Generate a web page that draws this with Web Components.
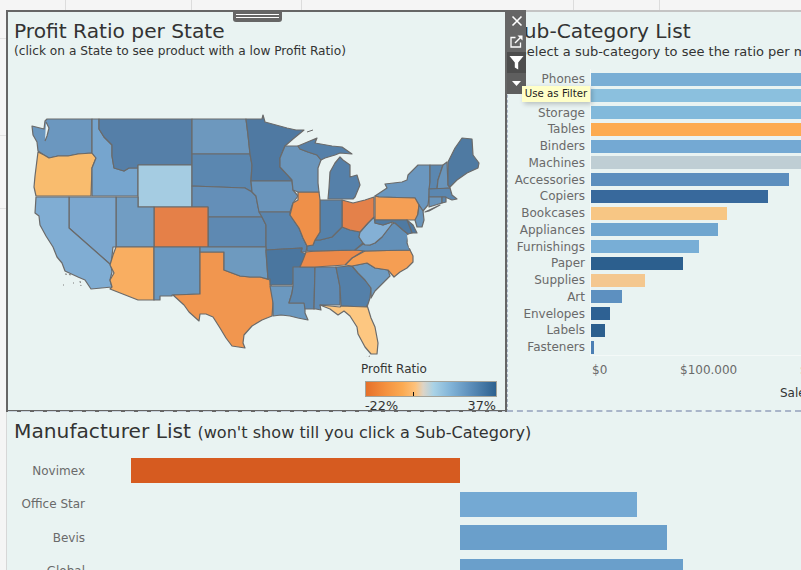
<!DOCTYPE html>
<html>
<head>
<meta charset="utf-8">
<style>
  html, body { margin: 0; height: 100%; overflow: hidden; }
  body { font-family: "DejaVu Sans", sans-serif; }
</style>
</head>
<body>
<dash-board>
  <viz-panel slot="map" active>
    <span slot="title">Profit Ratio per State</span>
    <span slot="sub">(click on a State to see product with a low Profit Ratio)</span>
    <us-map></us-map>
    <ratio-legend></ratio-legend>
  </viz-panel>
  <viz-panel slot="list">
    <span slot="title">Sub-Category List</span>
    <span slot="sub" style="padding-left:2.5px;font-size:13px">(Select a sub-category to see the ratio per manufacturer)</span>
    <sub-chart></sub-chart>
  </viz-panel>
  <viz-toolbar slot="tools"></viz-toolbar>
  <maker-panel slot="makers"></maker-panel>
</dash-board>

<script>
// page frame: the faint worksheet grid behind the dashboard
class DashBoard extends HTMLElement {
  constructor() {
    super();
    this.attachShadow({ mode: "open" });
    this.shadowRoot.innerHTML = `
      <style>
        :host {
          display: grid;
          grid-template-columns: 501px 294px;
          grid-template-rows: 402px 158px;
          padding: 10px 0 0 6px;
          width: 795px;
          height: 560px;
          overflow: hidden;
          position: relative;
          background-color: #f5f5f5;
          background-image:
            linear-gradient(#dcdcdc, #dcdcdc), linear-gradient(#dcdcdc, #dcdcdc),
            linear-gradient(#dcdcdc, #dcdcdc), linear-gradient(#dcdcdc, #dcdcdc),
            linear-gradient(#dcdcdc, #dcdcdc), linear-gradient(#e2e2e2, #e2e2e2),
            linear-gradient(#e2e2e2, #e2e2e2), linear-gradient(#e2e2e2, #e2e2e2);
          background-size: 1px 10px, 1px 10px, 1px 10px, 1px 10px, 1px 10px, 6px 1px, 6px 1px, 6px 1px;
          background-position: 65px 0, 191px 0, 301px 0, 573px 0, 659px 0, 0 38px, 0 135px, 0 208px;
          background-repeat: no-repeat;
        }
        .makers { grid-column: 1 / 3; }
      </style>
      <slot name="map"></slot>
      <slot name="list"></slot>
      <div class="makers"><slot name="makers"></slot></div>
      <slot name="tools"></slot>
    `;
  }
}

class VizPanel extends HTMLElement {
  constructor() {
    super();
    this.attachShadow({ mode: "open" });
    this.shadowRoot.innerHTML = `
      <style>
        :host {
          display: flex;
          flex-direction: column;
          box-sizing: border-box;
          height: 402px;
          position: relative;
          overflow: hidden;
          background: #e9f3f2;
          color: #333;
          border-top: 2px solid #c4c4c4;
          border-bottom: 2px dashed #a9b5c9;
          border-left: 1px dashed #a9b5c9;
          padding-left: 3px;
        }
        :host([active]) {
          border: 2px solid #666;
          padding-left: 6px;
          overflow: visible;
        }
        h2 { margin: 7px 0 0; font: 400 20.2px/24px "DejaVu Sans", sans-serif; white-space: nowrap; }
        p { margin: 1px 0 0; font: 400 12.2px/15px "DejaVu Sans", sans-serif; white-space: nowrap; }
        .handle {
          display: none;
          position: absolute;
          left: 225px; top: -2px;
          width: 49px; height: 12px;
          box-sizing: border-box;
          background: #666;
          border-radius: 0 0 3px 3px;
          padding: 4px 3px 0;
        }
        :host([active]) .handle { display: block; }
        .handle i { display: block; height: 1px; background: #fff; margin-bottom: 2px; }
        .seam {
          display: none;
          position: absolute;
          left: 0; right: 0; bottom: -2px;
          height: 1px;
          background: repeating-linear-gradient(90deg, #c9d3dc 0 9px, transparent 9px 13px);
        }
        :host([active]) .seam { display: block; }
      </style>
      <div class="handle"><i></i><i></i></div>
      <h2><slot name="title"></slot></h2>
      <p><slot name="sub"></slot></p>
      <slot></slot>
      <div class="seam"></div>
    `;
  }
}

// state outlines in page pixels, traced off the reference
const STATES = [
  ["#6b97bf", "M32 126 L44 129 L45 121 L47 119 L92 119 L92 153 L78 154 L68 156 L58 156 L49 158 L44 155 L38 151 L37 142 L33 135Z"],
  ["#f9bc6e", "M38 152 L44 155 L49 158 L58 156 L68 156 L78 154 L92 153 L96 158 L92 168 L91 196 L36 196 L34 187 L35 176Z"],
  ["#76a5ce", "M92 119 L99 119 L99 129 L104 137 L112 145 L112 156 L114 168 L124 171 L129 168 L138 168 L138 196 L92 196 L92 168 L96 158 L92 153Z"],
  ["#557fa8", "M99 119 L192 119 L192 165 L138 165 L138 168 L129 168 L124 171 L114 168 L112 156 L112 145 L104 137 L99 129Z"],
  ["#a5cce2", "M138 165 L192 165 L192 207 L138 207Z"],
  ["#6d98be", "M192 119 L246 119 L248 135 L250 154 L192 154Z"],
  ["#5b87b0", "M192 154 L250 154 L252 165 L251 181 L252 192 L245 188 L192 186Z"],
  ["#648fb8", "M192 186 L245 188 L252 192 L256 196 L258 207 L262 217 L208 217 L208 207 L192 207Z"],
  ["#4f79a2", "M246 119 L262 119 L263 115 L265 122 L276 125 L287 128 L296 130 L304 130 L293 139 L285 146 L280 158 L280 167 L288 175 L292 181 L251 181 L252 165 L250 154 L248 135Z"],
  ["#6994bb", "M251 181 L292 181 L293 190 L298 196 L293 203 L290 212 L259 212 L256 196 L252 192Z"],
  ["#5e89b2", "M208 217 L262 217 L266 225 L266 247 L208 247Z"],
  ["#5a85ae", "M259 212 L290 212 L290 215 L299 228 L303 238 L307 246 L306 252 L301 252 L302 248 L266 250 L266 225 L262 217Z"],
  ["#e58048", "M154 207 L208 207 L208 247 L154 247Z"],
  ["#719dc3", "M116 197 L138 197 L138 207 L154 207 L154 247 L116 247Z"],
  ["#7ba7cf", "M69 197 L116 197 L116 247 L113 247 L111 265 L69 228Z"],
  ["#80add3", "M36 197 L69 197 L69 228 L111 265 L112 272 L110 280 L112 287 L91 289 L85 280 L78 277 L65 271 L62 263 L57 257 L53 247 L46 236 L40 225 L39 216 L35 213Z"],
  ["#f9ae61", "M116 247 L154 247 L154 300 L138 300 L110 289 L112 287 L110 280 L114 273 L110 265 L113 255Z"],
  ["#6b98bf", "M154 247 L200 247 L200 294 L172 295 L172 296 L160 296 L160 300 L154 300Z"],
  ["#f1964f", "M200 252 L224 252 L224 270 L232 273 L240 276 L250 277 L260 277 L270 280 L272 290 L273 303 L272 316 L262 320 L252 326 L244 335 L243 343 L245 348 L232 346 L226 338 L220 328 L213 317 L206 314 L200 314 L199 321 L189 312 L184 305 L173 295 L200 294Z"],
  ["#6e9abf", "M200 247 L266 247 L266 252 L268 279 L260 277 L250 277 L240 276 L232 273 L224 270 L224 252 L200 252Z"],
  ["#4a769f", "M266 250 L302 248 L301 252 L306 254 L302 263 L296 273 L292 285 L270 285 L270 279 L268 279Z"],
  ["#6b98bf", "M270 286 L293 286 L292 293 L289 303 L305 303 L305 313 L308 320 L298 318 L290 316 L281 315 L273 316 L273 303Z"],
  ["#5b87b0", "M293 267 L315 267 L314 309 L305 309 L304 303 L289 303 L292 293 L293 286Z"],
  ["#5f8ab3", "M315 267 L336 267 L340 287 L340 305 L320 305 L321 310 L316 309 L314 309Z"],
  ["#5480a9", "M336 267 L352 266 L358 273 L365 280 L371 288 L370 298 L367 307 L341 306 L340 287Z"],
  ["#6e9bc1", "M352 266 L367 263 L375 268 L388 270 L390 276 L383 283 L375 291 L371 298 L371 288 L365 280 L358 273Z"],
  ["#f59e53", "M345 265 L352 258 L365 251 L410 250 L413 256 L413 262 L407 268 L400 272 L394 277 L388 270 L375 268 L367 263 L352 266Z"],
  ["#ec8a49", "M300 267 L303 260 L306 252 L316 251 L365 250 L352 258 L345 265 L315 267Z"],
  ["#5683ac", "M307 251 L307 246 L313 245 L315 240 L320 240 L332 237 L342 227 L350 230 L360 232 L359 237 L363 243 L355 250 L316 251Z"],
  ["#6390b8", "M355 250 L363 244 L370 245 L375 243 L382 237 L392 224 L395 223 L403 230 L408 234 L407 243 L410 250 L365 251Z"],
  ["#84b0d5", "M359 237 L360 232 L368 223 L374 217 L375 223 L383 225 L392 222 L392 224 L382 237 L375 243 L370 245 L365 245 L363 243Z"],
  ["#e4814a", "M342 200 L353 203 L365 200 L374 197 L374 217 L368 223 L360 232 L350 230 L342 227Z"],
  ["#5682ab", "M320 200 L328 200 L342 200 L342 227 L332 237 L320 240 L315 240 L320 232Z"],
  ["#ef9049", "M298 192 L319 192 L320 200 L320 232 L315 240 L313 245 L307 246 L303 238 L299 228 L290 215 L293 203 L298 200Z"],
  ["#6a95bb", "M280 158 L285 146 L298 146 L300 149 L308 152 L317 155 L321 160 L318 168 L318 183 L319 192 L298 192 L293 190 L292 180 L280 167Z"],
  ["#5580a9", "M298 146 L317 138 L315 143 L332 146 L342 147 L352 154 L340 153 L335 155 L325 158 L321 160 L317 155 L308 152 L300 149Z"],
  ["#5580a9", "M340 157 L343 160 L350 165 L350 177 L357 175 L360 185 L355 197 L353 199 L328 199 L329 188 L330 172 L335 163Z"],
  ["#6b97bf", "M385 184 L402 182 L407 180 L408 175 L418 165 L430 165 L430 182 L429 197 L428 205 L423 211 L419 205 L415 198 L379 197 L375 196 L387 188Z"],
  ["#f59f55", "M375 196 L379 197 L415 198 L419 205 L417 220 L375 220Z"],
  ["#6a95bb", "M419 205 L423 211 L424 220 L422 227 L417 227 L415 220 L418 214Z"],
  ["#4f79a2", "M407 220 L413 225 L417 233 L412 233Z"],
  ["#4f7aa2", "M375 220 L407 220 L412 233 L408 234 L403 230 L395 223 L392 222 L383 225 L375 223Z"],
  ["#5b87b0", "M430 165 L443 165 L438 180 L437 189 L429 189 L430 182Z"],
  ["#6a95bb", "M443 165 L447 162 L448 185 L450 188 L437 189 L438 180Z"],
  ["#4f7aa2", "M448 162 L455 148 L462 138 L472 139 L473 155 L479 163 L478 168 L467 173 L457 180 L450 187 L448 185Z"],
  ["#5b87b0", "M429 189 L450 188 L452 195 L457 199 L452 200 L445 197 L429 197Z"],
  ["#6a95bb", "M429 197 L442 197 L442 203 L429 207Z"],
  ["#5b87b0", "M442 197 L446 197 L446 202 L442 203Z"],
  ["#6b97bf", "M425 212 L440 205 L429 211Z"],
  ["#fdc781", "M320 305 L340 307 L341 306 L367 307 L367 305 L371 318 L375 327 L378 343 L377 354 L371 354 L365 347 L358 334 L357 327 L350 316 L344 311 L338 315 L330 309Z"],
];

class UsMap extends HTMLElement {
  constructor() {
    super();
    this.attachShadow({ mode: "open" });
    const shapes = STATES.map(([fill, d]) => `<path d="${d}" fill="${fill}"/>`).join("");
    this.shadowRoot.innerHTML = `
      <style>
        :host { display: block; margin: 46px 0 0 -6px; height: 252px; }
        svg { display: block; width: 497px; height: 252px; }
        path { stroke: #6a6a6a; stroke-width: 1.2; stroke-linejoin: round; }
        .speck { fill: none; stroke: #7a7a7a; stroke-width: 1; stroke-dasharray: 2 2; }
      </style>
      <svg viewBox="8 105 497 252">
        ${shapes}
        <path d="M46 122 L49 128 L47 136 L45 141" fill="#e9f3f2"/>
        <path class="speck" d="M65 274 L72 275 M73 283 L74 283 M80 281 L81 286 M63 285 L64 285"/>
        <path d="M307 132 L313 130" fill="none" style="stroke-width:1"/>
        <path class="speck" d="M365 358 L370 356"/>
        <path d="M408 235 L410 248" fill="none" style="stroke:#e9f3f2;stroke-width:2"/>
      </svg>
    `;
  }
}

class RatioLegend extends HTMLElement {
  constructor() {
    super();
    this.attachShadow({ mode: "open" });
    this.shadowRoot.innerHTML = `
      <style>
        :host { display: block; margin: 5px 0 0 347px; font: 12px/14px "DejaVu Sans", sans-serif; color: #333; }
        .bar {
          position: relative;
          box-sizing: border-box;
          width: 132px; height: 16px;
          margin: 5px 0 0 4px;
          border: 1px solid #a3a39a;
          background: linear-gradient(90deg, #e6702a 0%, #f4913f 15%, #fbaa52 28%, #fdc27c 38%, #ddd4c6 44%, #a9d2e6 52%, #82b4d8 65%, #5d8fbb 80%, #2d618f 100%);
        }
        .tick { position: absolute; left: 47px; bottom: 0; width: 1px; height: 4px; background: #111; }
        .ends { display: flex; justify-content: space-between; width: 131px; margin: 2px 0 0 4px; font-size: 12.8px; }
      </style>
      <div>Profit Ratio</div>
      <div class="bar"><div class="tick"></div></div>
      <div class="ends"><span>-22%</span><span>37%</span></div>
    `;
  }
}

class VizToolbar extends HTMLElement {
  constructor() {
    super();
    this.attachShadow({ mode: "open" });
    this.shadowRoot.innerHTML = `
      <style>
        :host {
          display: block;
          position: absolute;
          left: 507px; top: 10px;
          width: 19px;
          background: #666;
        }
        div { height: 21px; display: flex; align-items: center; justify-content: center; }
        .on { background: #4d4d4d; }
        .low { background: #5e5e5e; }
        svg { display: block; }
        .tip {
          position: absolute;
          left: 15px; top: 76px;
          width: 68px; height: 16px;
          box-sizing: border-box;
          background: #ffffc8;
          color: #222;
          font: 10.2px/16px "DejaVu Sans", sans-serif;
          text-align: center;
          white-space: nowrap;
          box-shadow: 2px 2px 5px rgba(0, 0, 0, .22);
        }
      </style>
      <div>
        <svg width="12" height="12" viewBox="0 0 12 12"><path d="M1.5 1.5 L10.5 10.5 M10.5 1.5 L1.5 10.5" stroke="#fff" stroke-width="1.6" fill="none"/></svg>
      </div>
      <div>
        <svg width="13" height="13" viewBox="0 0 13 13"><path d="M5.5 2.5 H1 V12 H10.5 V7.5" stroke="#fff" stroke-width="1.3" fill="none"/><path d="M5 8 L11 2" stroke="#fff" stroke-width="1.5" fill="none"/><path d="M7.5 0.5 H12.5 V5.5Z" fill="#fff"/></svg>
      </div>
      <div class="on">
        <svg width="15" height="15" viewBox="0 0 15 15"><path d="M0.5 1 H14.5 L9.2 7.5 V14.5 L5.8 12.5 V7.5Z" fill="#fff"/></svg>
      </div>
      <div class="low">
        <svg width="9" height="5" viewBox="0 0 9 5"><path d="M0 0 H9 L4.5 5Z" fill="#fff"/></svg>
      </div>
      <hover-tip class="tip">Use as Filter</hover-tip>
    `;
  }
}

class HoverTip extends HTMLElement {
  constructor() {
    super();
    this.attachShadow({ mode: "open" });
    this.shadowRoot.innerHTML = `<style>:host { display: block; }</style><slot></slot>`;
  }
}

class BarRow extends HTMLElement {
  constructor() {
    super();
    this.attachShadow({ mode: "open" });
    this.shadowRoot.innerHTML = `
      <style>
        :host {
          display: grid;
          grid-template-columns: var(--label-w) 1fr;
          column-gap: var(--label-gap);
          align-items: center;
          height: var(--row-h);
          color: #6a6a6a;
          font: 12px/14px "DejaVu Sans", sans-serif;
        }
        .label { text-align: right; white-space: nowrap; }
        .track { height: var(--bar-h); margin-left: var(--off, 0); }
        .fill { height: 100%; }
      </style>
      <div class="label"><slot></slot></div>
      <div class="track"><div class="fill"></div></div>
    `;
  }
  connectedCallback() {
    const fill = this.shadowRoot.querySelector(".fill");
    fill.style.width = this.getAttribute("w") + "px";
    fill.style.background = this.getAttribute("c");
  }
}

class SubChart extends HTMLElement {
  constructor() {
    super();
    this.attachShadow({ mode: "open" });
    const rows = [
      ["Phones", 400, "#79aed5"], ["Chairs", 400, "#8bc0de"], ["Storage", 400, "#82b9db"],
      ["Tables", 400, "#fdab50"], ["Binders", 400, "#74a9d3"], ["Machines", 400, "#bfced4"],
      ["Accessories", 198, "#5c8ebe"], ["Copiers", 177, "#38699c"], ["Bookcases", 136, "#f7c684"],
      ["Appliances", 127, "#6fa5cf"], ["Furnishings", 108, "#78aed6"], ["Paper", 92, "#2c5f8e"],
      ["Supplies", 54, "#f4c78f"], ["Art", 31, "#5d90c0"], ["Envelopes", 19, "#2e6193"],
      ["Labels", 14, "#2c5f8e"], ["Fasteners", 3, "#4c7fb4"],
    ];
    this.shadowRoot.innerHTML = `
      <style>
        :host {
          display: block;
          margin-top: 10.8px;
          --label-w: 74px;
          --label-gap: 6px;
          --row-h: 16.75px;
          --bar-h: 13px;
        }
        .plot { position: relative; }
        .plot::after {
          content: "";
          position: absolute;
          left: 79px; right: 0; top: -2px; bottom: 0;
          border-left: 1px solid #f4f9f8;
          border-bottom: 1px solid #f4f9f8;
          pointer-events: none;
        }
        .axis {
          display: flex;
          margin: 7.5px 0 0 81px;
          font: 12px/14px "DejaVu Sans", sans-serif;
          color: #6a6a6a;
          white-space: nowrap;
        }
        .axis span { flex: none; width: 88px; }
        .axis span + span { width: 120px; }
        .name { margin: 9px 0 0 269px; font: 12px/14px "DejaVu Sans", sans-serif; color: #333; white-space: nowrap; }
      </style>
      <div class="plot">
        ${rows.map(([n, w, c]) => `<bar-row w="${w}" c="${c}">${n}</bar-row>`).join("")}
      </div>
      <div class="axis"><span>$0</span><span>$100.000</span><span>$200.000</span></div>
      <div class="name">Sales</div>
    `;
  }
}

class MakerPanel extends HTMLElement {
  constructor() {
    super();
    this.attachShadow({ mode: "open" });
    this.shadowRoot.innerHTML = `
      <style>
        :host {
          display: block;
          box-sizing: border-box;
          height: 158px;
          overflow: hidden;
          background: #e9f3f2;
          color: #333;
          border-left: 1px solid #d7d7d7;
          padding-left: 7px;
          --label-w: 71px;
          --label-gap: 46px;
          --row-h: 33.5px;
          --bar-h: 25px;
        }
        h2 { margin: 7px 0 9px; font: 400 20.2px/24px "DejaVu Sans", sans-serif; white-space: nowrap; }
        small { font-size: 16.1px; }
      </style>
      <h2>Manufacturer List <small>(won't show till you click a Sub-Category)</small></h2>
      <bar-row w="329" c="#d65b20">Novimex</bar-row>
      <bar-row w="177" c="#74a9d3" style="--off:329px">Office Star</bar-row>
      <bar-row w="207" c="#6a9fcb" style="--off:329px">Bevis</bar-row>
      <bar-row w="223" c="#6a9fcb" style="--off:329px">Global</bar-row>
    `;
  }
}

customElements.define("dash-board", DashBoard);
customElements.define("viz-panel", VizPanel);
customElements.define("us-map", UsMap);
customElements.define("ratio-legend", RatioLegend);
customElements.define("hover-tip", HoverTip);
customElements.define("viz-toolbar", VizToolbar);
customElements.define("bar-row", BarRow);
customElements.define("sub-chart", SubChart);
customElements.define("maker-panel", MakerPanel);
</script>
</body>
</html>
